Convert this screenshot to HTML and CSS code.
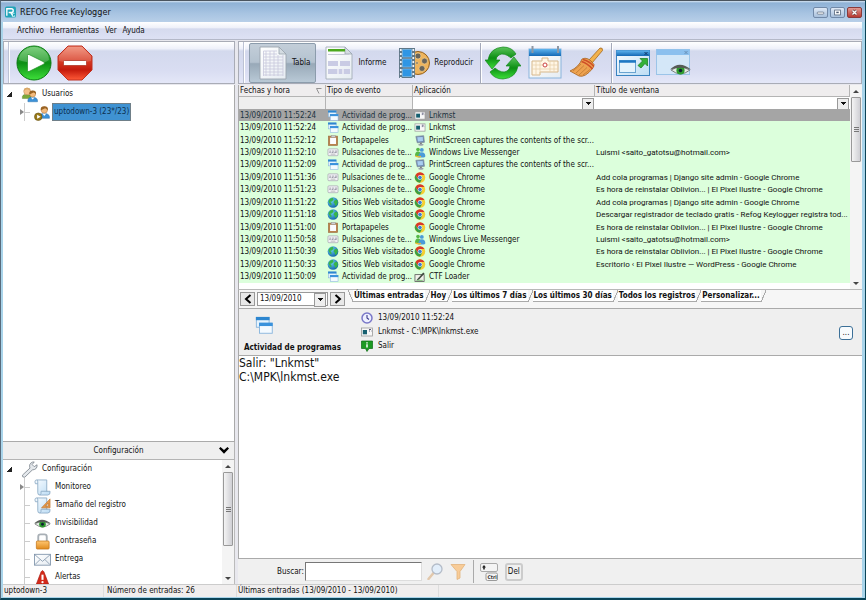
FILE: index.html
```html
<!DOCTYPE html>
<html lang="es">
<head>
<meta charset="utf-8">
<title>REFOG Free Keylogger</title>
<link rel="stylesheet" href="styles.css">
</head>
<body>
<svg class="defs" width="0" height="0" aria-hidden="true">
  <defs>
    <linearGradient id="gGreen" x1="0" y1="0" x2="0" y2="1"><stop offset="0" stop-color="#5cc45c"/><stop offset=".5" stop-color="#0c8f14"/><stop offset="1" stop-color="#3ee03a"/></linearGradient>
    <linearGradient id="gRed" x1="0" y1="0" x2="0" y2="1"><stop offset="0" stop-color="#f08a72"/><stop offset=".45" stop-color="#d63a24"/><stop offset=".7" stop-color="#c41a0c"/><stop offset="1" stop-color="#ff5a38"/></linearGradient>
    <linearGradient id="gPaper" x1="0" y1="0" x2="1" y2="1"><stop offset="0" stop-color="#ffffff"/><stop offset="1" stop-color="#e6ecf2"/></linearGradient>
    <linearGradient id="gBlue" x1="0" y1="0" x2="0" y2="1"><stop offset="0" stop-color="#5fb4ee"/><stop offset="1" stop-color="#1468b4"/></linearGradient>
    <linearGradient id="gSky" x1="0" y1="0" x2="1" y2="1"><stop offset="0" stop-color="#f8fcff"/><stop offset="1" stop-color="#bcdcf4"/></linearGradient>
    <linearGradient id="gGold" x1="0" y1="0" x2="0" y2="1"><stop offset="0" stop-color="#ffc772"/><stop offset="1" stop-color="#e08a1c"/></linearGradient>
    <radialGradient id="gGlobe" cx=".35" cy=".3" r=".8"><stop offset="0" stop-color="#6fd4f4"/><stop offset="1" stop-color="#0a5aa4"/></radialGradient>
  </defs>
  <symbol id="i-win" viewBox="0 0 12 12"><rect x=".9" y="1" width="8.500" height="6.500" fill="#e6f3fd" stroke="#86b4dc" stroke-width=".6"/><rect x=".6" y=".6" width="9.100" height="2.200" fill="#2c86d0"/><rect x="3" y="5" width="8.500" height="6.500" fill="#f4faff" stroke="#86b4dc" stroke-width=".6"/><rect x="2.700" y="4.400" width="9.100" height="2.300" fill="#3a92dc"/></symbol>
  <symbol id="i-clip" viewBox="0 0 12 12"><rect x="1" y="1.200" width="10" height="10.200" fill="#b9834e" stroke="#9d6c40" stroke-width=".7"/><rect x="2.800" y="3" width="6.500" height="6.800" fill="#fbfbff"/><rect x="4" y=".5" width="4.500" height="2" fill="#ced0d4" stroke="#888" stroke-width=".4"/></symbol>
  <symbol id="i-key" viewBox="0 0 12 12"><rect x=".5" y="2" width="11" height="7.500" rx="1" fill="#f2f2f6" stroke="#9c9ca8" stroke-width=".7"/><path d="M2 4.500h2m1 0h2m1 0h2.500M2 6h1.500m1 0h2m1 0h2.500" stroke="#8c8c9a" stroke-width=".9"/><path d="M3.500 7.800h5" stroke="#aaa" stroke-width=".8"/></symbol>
  <symbol id="i-globe" viewBox="0 0 12 12"><circle cx="6" cy="6" r="5.800" fill="url(#gGlobe)"/><path d="M2 2.600Q4 .8 6 1.200L6.600 3 4.800 5 3 5.300 4.500 7.300 4 9.500 2.500 7.500 1 5ZM8 3.500l2.300-.6 1.100 2.600-1.200 3.200-1.700 1-.8-2.500-1.200-1.500Z" fill="#39b54a"/></symbol>
  <symbol id="i-chrome" viewBox="0 0 12 12"><circle cx="6" cy="6" r="5.700" fill="#f4cf33"/><path d="M1.060 3.150A5.700 5.700 0 0 1 10.940 3.150H6L3.530 7.430Z" fill="#d9382c"/><path d="M1.060 3.150A5.700 5.700 0 0 0 6 11.700L8.470 7.430 3.530 7.430Z" fill="#3a9f45"/><circle cx="6" cy="6" r="2.500" fill="#fff"/><circle cx="6" cy="6" r="2" fill="#3e7fd0"/></symbol>
  <symbol id="i-msn" viewBox="0 0 12 12"><circle cx="3.800" cy="2.800" r="2" fill="#57b947"/><path d="M.5 10Q.5 5 3.800 5t3.500 4.500Z" fill="#57b947"/><circle cx="8" cy="3.200" r="2.100" fill="#4a9bd8"/><path d="M4 11.500Q4.500 5.800 8 5.800t3.800 4Q12 11.500 8 11.500Z" fill="#4a9bd8"/><path d="M1 9.500q3 2.500 6 .5" stroke="#f3b92c" stroke-width="1.300" fill="none"/></symbol>
  <symbol id="i-screen" viewBox="0 0 12 12"><path d="M1.500 1.500 10 .8 10.800 8 3 8.500Z" fill="#6f8db4" stroke="#7c869a" stroke-width=".8"/><path d="M3 2.500 9 2.200 9.300 6.500 3.800 7Z" fill="#a9cdf0"/><path d="M6 8.500h2v1.500H6Z" fill="#777"/><ellipse cx="7" cy="10.600" rx="3" ry="1" fill="#9ba0aa"/></symbol>
  <symbol id="i-exe" viewBox="0 0 12 12"><rect x=".5" y="2" width="11" height="8" fill="#f8f8f8" stroke="#9a9a9a" stroke-width=".8"/><rect x="1.800" y="4" width="4.200" height="4.300" fill="#176070"/><path d="M8 3.500h2M8 5h1m1 0h.5" stroke="#446" stroke-width=".9"/></symbol>
  <symbol id="i-ctf" viewBox="0 0 12 12"><rect x=".5" y="4" width="10" height="7.500" fill="#f1f1ea" stroke="#4a4a4a" stroke-width=".8"/><path d="M3 9 9.500 1.500 11 2.800 5 9.300 2.500 10Z" fill="#404a40"/><path d="M2 10.200h7" stroke="#5a5" stroke-width=".8"/></symbol>
  <symbol id="i-person" viewBox="0 0 18 18"><path d="M3 17q-1-6 6-6.500 8 .500 7 6.500Z" fill="#3c92d8" stroke="#226aa8" stroke-width=".6"/><path d="m7 11 2.500 3 2.500-3Z" fill="#fff"/><circle cx="9.500" cy="6.500" r="4" fill="#f3bb7e" stroke="#a86a2c" stroke-width=".6"/><path d="M5 7Q4 1.500 9.500 1.500T14 7Q12.500 4.500 10.500 4.200 8 5.500 5 7Z" fill="#9a6424"/></symbol>
  <symbol id="i-elder" viewBox="0 0 18 18"><path d="M2 17q-1-6 6-6.500 8 .500 7 6.500Z" fill="#7aa83a" stroke="#5a7c2a" stroke-width=".6"/><circle cx="9" cy="6.500" r="5" fill="#f3c08a" stroke="#b47c44" stroke-width=".6"/><path d="M4 6Q4 1 9 1T14 6Q11 3.500 9 3.500T4 6Z" fill="#d8a868"/></symbol>
  <symbol id="i-scroll" viewBox="0 0 18 18"><path d="M1 3Q1 1 3 1H13.500V13H17Q17.500 17 14.500 17H6Q4 17 4 14.500V5H1.500Z" fill="url(#gSky)" stroke="#8aa9c4" stroke-width=".9"/><path d="M4 5V3Q4 1 3 1M6 17Q8 16 7.500 13H14" fill="none" stroke="#8aa9c4" stroke-width=".9"/></symbol>
  <symbol id="i-eye" viewBox="0 0 18 11"><path d="M1 6Q8 1 17 6 9 12.500 1 6Z" fill="#e3ebe3" stroke="#666" stroke-width=".7"/><circle cx="9" cy="6.300" r="3.500" fill="#2e9b2e"/><circle cx="9" cy="6.300" r="1.500" fill="#123"/><path d="M0 5.500Q8-2.500 18 5.500 9 2.300 0 5.500Z" fill="#565c56"/></symbol>
</svg>

<div class="window">
  <header class="titlebar">
    <svg class="logo" viewBox="0 0 12 12"><rect width="12" height="12" rx="2" fill="#22a4b8"/><path d="M2 10V2.500H7Q9 2.500 9 4.500T7 6.500H4M6 6.500 8.500 10" fill="none" stroke="#fff" stroke-width="1.500"/><path d="M10.500 7.500H8V11h2.500V9.500" fill="none" stroke="#d8ffff" stroke-width=".8"/></svg>
    <h1>REFOG Free Keylogger</h1>
    <div class="winbtns">
      <button aria-label="Minimizar"><svg viewBox="0 0 15 11"><rect x="3.500" y="5" width="8" height="2.500" rx="1" fill="#fff" stroke="#4a5a70" stroke-width=".8"/></svg></button>
      <button aria-label="Maximizar"><svg viewBox="0 0 15 11"><rect x="4" y="2.500" width="7" height="6" fill="#fff" stroke="#4a5a70" stroke-width=".9"/><rect x="6" y="4.500" width="3" height="1.800" fill="#4a5a70"/></svg></button>
      <button class="close" aria-label="Cerrar"><svg viewBox="0 0 15 11"><path d="m5 3 5 5m0-5-5 5" stroke="#5a2a2a" stroke-width="3"/><path d="m5 3 5 5m0-5-5 5" stroke="#fff" stroke-width="1.800"/></svg></button>
    </div>
  </header>

  <nav class="menubar">
    <a href="#">Archivo</a><a href="#">Herramientas</a><a href="#">Ver</a><a href="#">Ayuda</a>
  </nav>

  <div class="panes">
    <aside class="left">
      <div class="toolbar">
        <button class="tool round" aria-label="Iniciar"><svg width="36" height="36" viewBox="0 0 36 36"><circle cx="18" cy="18" r="17" fill="url(#gGreen)" stroke="#0b7a12"/><path d="M3 15A15 13 0 0 1 33 15Q26 20 18 18 8 17 3 15Z" fill="#fff" opacity=".22"/><path d="M11.500 10.500Q11.500 9 13 9.500L28 17Q29 18 28 19L13 26.500Q11.500 27 11.500 25.500Z" fill="#fff" stroke="#1c8c22" stroke-width=".7"/></svg></button>
        <button class="tool round" aria-label="Detener"><svg width="36" height="36" viewBox="0 0 36 36"><path d="M11 1H25L35 11V25L25 35H11L1 25V11Z" fill="url(#gRed)" stroke="#c03020"/><path d="M11 2H25L34 11V16Q18 20 2 16V11Z" fill="#fff" opacity=".15"/><rect x="6.500" y="15.500" width="23" height="5" rx="1" fill="#fff" stroke="#a82818" stroke-width=".7"/></svg></button>
      </div>
      <ul class="tree users">
        <li class="root"><i class="open"></i><svg width="17" height="17" viewBox="0 0 18 18"><use href="#i-elder" x="0" y="0" width="13" height="15"/><use href="#i-person" x="5" y="3" width="14" height="15"/></svg><span>Usuarios</span></li>
        <li class="child"><i class="shut"></i><svg width="17" height="17" viewBox="0 0 18 18"><use href="#i-person" x="3" y="0" width="15" height="17"/><circle cx="4.500" cy="13.500" r="4" fill="#9a7a18" stroke="#5f4a0c" stroke-width=".6"/><path d="M3.300 11.500 7 13.500 3.300 15.500Z" fill="#fff"/></svg><span class="sel">uptodown-3 (23*/23)</span></li>
      </ul>
      <button class="section"><span>Configuración</span><svg width="10" height="7" viewBox="0 0 10 7"><path d="M0 1.500 1.500 0 5 3 8.500 0 10 1.500 5 6.800Z"/></svg></button>
      <div class="config">
        <ul class="tree">
          <li class="root"><i class="open"></i><svg width="17" height="17" viewBox="0 0 18 18"><path d="M1.500 15 9.500 7.500Q8 3 12 1.200L14 1 11.800 3.800 14 6 17 4Q17.500 9 12 9.500L4 17.200Q1 17.500 1.500 15Z" fill="#e4e8ec" stroke="#7d858e" stroke-width=".9"/></svg><span>Configuración</span></li>
          <li class="child"><i class="shut"></i><svg width="17" height="17"><use href="#i-scroll"/></svg><span>Monitoreo</span></li>
          <li class="child"><i></i><svg width="17" height="17" viewBox="0 0 18 18"><use href="#i-scroll"/><path d="M8 11.500 17 2V11.500ZM12 9.800H15V6.500Z" fill="#e99a4a" stroke="#b4691e" stroke-width=".6" fill-rule="evenodd"/></svg><span>Tamaño del registro</span></li>
          <li class="child"><i></i><svg width="17" height="11"><use href="#i-eye"/></svg><span>Invisibilidad</span></li>
          <li class="child"><i></i><svg width="17" height="17" viewBox="0 0 18 18"><path d="M4.500 9V4Q4.500 1.500 7 1.500H11Q13.500 1.500 13.500 4V9" fill="none" stroke="#a9b0b6" stroke-width="2"/><rect x="2.500" y="8.500" width="13.500" height="8.500" rx="1" fill="url(#gGold)" stroke="#c5761a" stroke-width=".8"/></svg><span>Contraseña</span></li>
          <li class="child"><i></i><svg width="17" height="17" viewBox="0 0 18 18"><rect x=".5" y="3.500" width="17" height="11.500" fill="url(#gPaper)" stroke="#7d92aa" stroke-width=".9"/><path d="M1 4 9 11 17 4M1 14.500 6.500 9M17 14.500 11.500 9" fill="none" stroke="#8799ae" stroke-width=".9"/></svg><span>Entrega</span></li>
          <li class="child"><i></i><svg width="17" height="17" viewBox="0 0 18 18"><path d="M7.500 3 9 1.500 10.500 3 15.500 16H2.500Z" fill="#d42a1a" stroke="#a51a10" stroke-width=".7"/><path d="M9 6V11.500" stroke="#fff" stroke-width="2.200"/><circle cx="9" cy="14" r="1.200" fill="#fff"/></svg><span>Alertas</span></li>
        </ul>
        <div class="scroll"><i class="up"></i><b></b><i class="down"></i></div>
      </div>
    </aside>

    <main class="right">
      <div class="toolbar">
        <button class="tool view on"><svg width="28" height="34" viewBox="0 0 28 34"><path d="M1 1H20L27 8V33H1Z" fill="url(#gPaper)" stroke="#9aa4ae" stroke-width=".9"/><path d="M20 1V8H27Z" fill="#d4dce2" stroke="#9aa4ae" stroke-width=".8"/><path d="M4.500 5H18M4.500 8H18M4.500 11H24M4.500 14H24M4.500 17H24M4.500 20H24M4.500 23H24M4.500 26H24M4.500 29H24M4.500 5V30M7 5V30M11 5V30M15 5V30M19 9V30M24 9V30" stroke="#c8c8dc" stroke-width=".8"/></svg><span>Tabla</span></button>
        <button class="tool view report"><svg width="28" height="34" viewBox="0 0 28 34"><path d="M1 1H20L27 8V33H1Z" fill="url(#gPaper)" stroke="#a4aeb8" stroke-width=".9"/><path d="M20 1V8H27Z" fill="#d4dce2" stroke="#9aa4ae" stroke-width=".8"/><rect x="3" y="3" width="17" height="2.500" fill="#4aa81c"/><path d="M3 8.500H24" stroke="#c4c8d4"/><path d="M3 15H13V20H3ZM15 15H25V20H15ZM3 23H25V28H3Z" fill="#c9cbe4"/><path d="M13 23V28M18 23V28" stroke="#fff"/></svg><span>Informe</span></button>
        <button class="tool view play"><svg width="32" height="32" viewBox="0 0 32 32"><circle cx="20" cy="16" r="11.500" fill="#eeb45c" stroke="#93601c"/><g fill="#68655c" stroke="#f6d08c" stroke-width=".7"><circle cx="20" cy="9" r="3"/><circle cx="26.500" cy="14" r="3"/><circle cx="24" cy="21.500" r="3"/><circle cx="19" cy="16" r="1.300"/></g><path d="M1 1H17V31H1Z" fill="#607888"/><path d="M2.800 2V31M15.300 2V31" stroke="#f0f4f8" stroke-width="1.700" stroke-dasharray="2 2"/><path d="M4.500 2.500H13.500V10H4.500ZM4.500 12H13.500V20H4.500ZM4.500 22H13.500V29.500H4.500Z" fill="#2f96e4" stroke="#8cc8f4" stroke-width=".6"/></svg><span>Reproducir</span></button>
        <button class="tool grip" aria-label="Actualizar"><svg width="36" height="34" viewBox="0 0 36 34"><path d="M3 14Q5 2 18 1 27 1 31 8L26 12Q19 6 14 9 11 11 11 14L15 14 7 23 0 14Z" fill="url(#gGreen)" stroke="#16881c" stroke-width=".7"/><path d="M33 20Q31 32 18 33 9 33 5 26L10 22Q17 28 22 25 25 23 25 20L21 20 29 11 36 20Z" fill="url(#gGreen)" stroke="#16881c" stroke-width=".7"/></svg></button>
        <button class="tool" aria-label="Calendario"><svg width="34" height="33" viewBox="0 0 34 33"><rect x="1" y="3" width="32" height="29" fill="url(#gPaper)" stroke="#8ab4dc"/><rect x="1" y="3" width="32" height="7" fill="url(#gBlue)"/><path d="M4.500 0V7M30 0V7" stroke="#8d97a4" stroke-width="2"/><path d="M4 15H14V12H20V15H30V26H12V29H4Z" fill="#fff6e6" stroke="#d6b78c"/><path d="M4 19H30M4 23H30M8 15V29M12 15V29M22 15V26M26 15V26" stroke="#e8d2ac" stroke-width=".8"/><circle cx="17" cy="19" r="2" fill="#fff" stroke="#c44"/></svg></button>
        <button class="tool" aria-label="Limpiar"><svg width="34" height="32" viewBox="0 0 34 32"><path d="M20 13 31 1Q34 .5 33.500 3.500L23 16Z" fill="#f2b24c" stroke="#a36820" stroke-width=".8"/><path d="M13 12Q19 9 25 17.500L24 21Q16 31 10 29L1 24Q10 20 13 12Z" fill="#eea250" stroke="#a8621c" stroke-width=".8"/><path d="M12.500 14.500Q18 16 23.500 22M14 12.500Q20 14 25 19.500" stroke="#cf4f28" stroke-width="1.600" fill="none"/><path d="M12 17 4 24M15 18.500 7 26M18 20.500 10 28M21 22.500 14 28" stroke="#b8742c" stroke-width=".7"/></svg></button>
        <button class="tool grip last" aria-label="Restaurar ventana"><svg width="34" height="26" viewBox="0 0 34 26"><rect x=".5" y=".5" width="33" height="25" fill="url(#gSky)" stroke="#3a83c0"/><rect x=".5" y=".5" width="33" height="5.500" fill="url(#gBlue)"/><path d="m28.500 2 3 3m0-3-3 3" stroke="#0d3868"/><rect x="3.500" y="10.500" width="16" height="12" fill="#e4f2fc" stroke="#6aa3d0"/><path d="M3 11.500H20" stroke="#1f78c4" stroke-width="2.500"/><path d="M24 8.500H31.500V16L29 13.500 25 18 22 15.500 26.500 11Z" fill="#35b238" stroke="#157a1c" stroke-width=".7"/></svg></button>
        <button class="tool" aria-label="Ocultar ventana"><svg width="35" height="27" viewBox="0 0 35 27"><rect x=".5" y=".5" width="33" height="25" fill="#d4e7f8" stroke="#9bc4e8"/><rect x=".5" y=".5" width="33" height="5.500" fill="#8cc0ee"/><path d="m28.500 2 3 3m0-3-3 3" stroke="#6890b8"/><use href="#i-eye" x="14" y="14" width="21" height="13"/></svg></button>
      </div>

      <div class="grid">
        <table>
          <colgroup><col class="c1"><col class="c2"><col class="c3"><col></colgroup>
          <thead>
            <tr><th>Fechas y hora<svg class="sort" width="6" height="6" viewBox="0 0 6 6"><path d="M.5 .5H5.500M.5 .5 3 5.500" fill="none" stroke="#888" stroke-width=".9"/></svg></th><th>Tipo de evento</th><th>Aplicación</th><th>Título de ventana</th></tr>
            <tr class="filter"><td></td><td></td><td><div class="combo"><select aria-label="Filtrar aplicación"><option></option></select></div></td><td><div class="combo"><select aria-label="Filtrar título de ventana"><option></option></select></div></td></tr>
          </thead>
          <tbody>
            <tr class="current"><td>13/09/2010 11:52:24</td><td><svg><use href="#i-win"/></svg>Actividad de prog...</td><td><svg><use href="#i-exe"/></svg>Lnkmst</td><td></td></tr>
            <tr><td>13/09/2010 11:52:24</td><td><svg><use href="#i-win"/></svg>Actividad de prog...</td><td><svg><use href="#i-exe"/></svg>Lnkmst</td><td></td></tr>
            <tr><td>13/09/2010 11:52:12</td><td><svg><use href="#i-clip"/></svg>Portapapeles</td><td><svg><use href="#i-screen"/></svg>PrintScreen captures the contents of the scr...</td><td></td></tr>
            <tr><td>13/09/2010 11:52:10</td><td><svg><use href="#i-key"/></svg>Pulsaciones de te...</td><td><svg><use href="#i-msn"/></svg>Windows Live Messenger</td><td>Luismi &lt;saito_gatotsu@hotmail.com&gt;</td></tr>
            <tr><td>13/09/2010 11:52:09</td><td><svg><use href="#i-win"/></svg>Actividad de prog...</td><td><svg><use href="#i-screen"/></svg>PrintScreen captures the contents of the scr...</td><td></td></tr>
            <tr><td>13/09/2010 11:51:36</td><td><svg><use href="#i-key"/></svg>Pulsaciones de te...</td><td><svg><use href="#i-chrome"/></svg>Google Chrome</td><td>Add cola programas | Django site admin - Google Chrome</td></tr>
            <tr><td>13/09/2010 11:51:23</td><td><svg><use href="#i-key"/></svg>Pulsaciones de te...</td><td><svg><use href="#i-chrome"/></svg>Google Chrome</td><td>Es hora de reinstalar Oblivion... | El Pixel Ilustre - Google Chrome</td></tr>
            <tr><td>13/09/2010 11:51:22</td><td><svg><use href="#i-globe"/></svg>Sitios Web visitados</td><td><svg><use href="#i-chrome"/></svg>Google Chrome</td><td>Add cola programas | Django site admin - Google Chrome</td></tr>
            <tr><td>13/09/2010 11:51:18</td><td><svg><use href="#i-globe"/></svg>Sitios Web visitados</td><td><svg><use href="#i-chrome"/></svg>Google Chrome</td><td>Descargar registrador de teclado gratis - Refog Keylogger registra tod...</td></tr>
            <tr><td>13/09/2010 11:51:00</td><td><svg><use href="#i-clip"/></svg>Portapapeles</td><td><svg><use href="#i-chrome"/></svg>Google Chrome</td><td>Es hora de reinstalar Oblivion... | El Pixel Ilustre - Google Chrome</td></tr>
            <tr><td>13/09/2010 11:50:58</td><td><svg><use href="#i-key"/></svg>Pulsaciones de te...</td><td><svg><use href="#i-msn"/></svg>Windows Live Messenger</td><td>Luismi &lt;saito_gatotsu@hotmail.com&gt;</td></tr>
            <tr><td>13/09/2010 11:50:39</td><td><svg><use href="#i-globe"/></svg>Sitios Web visitados</td><td><svg><use href="#i-chrome"/></svg>Google Chrome</td><td>Es hora de reinstalar Oblivion... | El Pixel Ilustre - Google Chrome</td></tr>
            <tr><td>13/09/2010 11:50:33</td><td><svg><use href="#i-globe"/></svg>Sitios Web visitados</td><td><svg><use href="#i-chrome"/></svg>Google Chrome</td><td>Escritorio ‹ El Pixel Ilustre — WordPress - Google Chrome</td></tr>
            <tr><td>13/09/2010 11:50:09</td><td><svg><use href="#i-win"/></svg>Actividad de prog...</td><td><svg><use href="#i-ctf"/></svg>CTF Loader</td><td></td></tr>
          </tbody>
        </table>
        <div class="scroll"><i class="up"></i><b></b><i class="down"></i></div>
      </div>

      <div class="range">
        <button class="step" aria-label="Día anterior"><svg width="8" height="10" viewBox="0 0 8 10"><path d="M6.500 1 2 5 6.500 9" fill="none" stroke="#000" stroke-width="2"/></svg></button>
        <div class="combo date"><select aria-label="Fecha"><option>13/09/2010</option></select></div>
        <button class="step" aria-label="Día siguiente"><svg width="8" height="10" viewBox="0 0 8 10"><path d="M1.500 1 6 5 1.500 9" fill="none" stroke="#000" stroke-width="2"/></svg></button>
        <div class="tabs">
          <button class="first">Últimas entradas</button><button>Hoy</button><button>Los últimos 7 días</button><button>Los últimos 30 días</button><button>Todos los registros</button><button>Personalizar...</button>
        </div>
      </div>

      <section class="info">
        <div class="kind"><svg width="18" height="18"><use href="#i-win"/></svg><strong>Actividad de programas</strong></div>
        <ul class="facts">
          <li><svg width="12" height="12" viewBox="0 0 12 12"><circle cx="6" cy="6" r="5" fill="#eef0ff" stroke="#7a78c8" stroke-width="1.500"/><path d="M6 3V6L8 7.500" fill="none" stroke="#3c3c8c" stroke-width="1.100"/></svg>13/09/2010 11:52:24</li>
          <li><svg width="12" height="12"><use href="#i-exe"/></svg>Lnkmst - C:\MPK\lnkmst.exe</li>
          <li><svg width="12" height="12" viewBox="0 0 12 12"><path d="M.5 1H11.500V8.500H8L6 11.500 4.500 8.500H.5Z" fill="#1d9a22" stroke="#0c6c12" stroke-width=".7"/><path d="M6 2.200V3.500M6 4.300V7.500" stroke="#fff" stroke-width="1.500"/></svg>Salir</li>
        </ul>
        <button class="more" aria-label="Más detalles">...</button>
      </section>

      <div class="text"><p>Salir: "Lnkmst"</p><p>C:\MPK\lnkmst.exe</p></div>

      <form class="search">
        <label for="q">Buscar:</label><input id="q" type="text">
        <button type="button" aria-label="Buscar texto"><svg width="16" height="17" viewBox="0 0 16 17"><path d="M6.500 10 1.500 16" stroke="#e2c8ac" stroke-width="2.500" stroke-linecap="round"/><circle cx="10" cy="6" r="5" fill="#e2eefa" stroke="#b4bcc8" stroke-width="1.300"/></svg></button>
        <button type="button" aria-label="Filtrar"><svg width="16" height="17" viewBox="0 0 16 17"><path d="M1 1.500H15L10 8.500V15L7 16.500V8.500Z" fill="#f8cc98" stroke="#e2b47c" stroke-width=".8"/></svg></button>
        <span class="bar"></span>
        <button type="button" aria-label="Mayús + Ctrl"><svg width="18" height="18" viewBox="0 0 18 18"><rect x=".5" y=".5" width="17" height="8" rx="1.500" fill="#f4f4f4" stroke="#aaa"/><path d="M2 4.500 4 2 6 4.500H4.800V6.500H3.200V4.500Z" fill="#222"/><rect x="6" y="10" width="11.500" height="7.500" rx="1.500" fill="#f4f4f4" stroke="#9a9a9a"/><text x="7.500" y="16" font-size="5" font-weight="bold" fill="#333">Ctrl</text></svg></button>
        <button type="button" class="del">Del</button>
      </form>
    </main>
  </div>

  <footer class="status"><span>uptodown-3</span><span>Número de entradas: 26</span><span>Últimas entradas (13/09/2010 - 13/09/2010)</span><span></span></footer>
</div>
</body>
</html>
```
FILE: styles.css
```css
* { box-sizing: border-box; }
body, h1, ul, p { margin: 0; padding: 0; }
ul { list-style: none; }
body {
  font: 8px/12px "DejaVu Sans Condensed", "DejaVu Sans", sans-serif;
  color: #111;
  overflow: hidden;
}
button, input, select { font: inherit; color: inherit; margin: 0; padding: 0; border: 0; background: none; }
a { color: inherit; text-decoration: none; }
svg { display: block; flex: none; }
.defs { position: absolute; }

.window {
  display: flex;
  flex-direction: column;
  height: 100vh;
  border: solid;
  border-width: 1px 1px 2px;
  border-color: #4a5560 #0b4458 #0b4458 #596b7c;
  background: #a9d4ea;
  padding: 0 3px 1px 2px;
}

.titlebar {
  display: flex;
  align-items: center;
  height: 21px;
  flex: none;
  margin: 0 -3px 0 -2px;
  padding: 1px 3px 0 4px;
  gap: 4px;
  background: linear-gradient(#d6e4f2 0, #8fb2d6 2px, #a8c4e2 60%, #b8cfe8);
}
.titlebar h1 { font-size: 9px; font-weight: normal; }
.logo { width: 11px; height: 12px; }
.winbtns { display: flex; gap: 2px; margin-left: auto; }
.winbtns button { width: 15px; height: 11px; border: 1px solid #7189a8; border-radius: 2px; background: linear-gradient(#dfe9f5, #a8c0dc); }
.winbtns .close { border-color: #8a3a3a; background: linear-gradient(#e09a92, #b83a32); }
.winbtns svg { width: 100%; height: 100%; }

.menubar {
  display: flex;
  align-items: center;
  gap: 6px;
  height: 18px;
  flex: none;
  padding: 1px 0 0 14px;
  border-bottom: 1px solid #b4b8c8;
  background: linear-gradient(#fff 0, #eef0f9 35%, #d5daee 40%, #dde1f4);
}

.panes { display: grid; grid-template-columns: 232px minmax(0, 1fr); gap: 3px; flex: 1; min-height: 0; background: #e8e8ee; }
.left, .right { display: flex; flex-direction: column; min-width: 0; min-height: 0; }

.toolbar {
  display: flex;
  align-items: center;
  height: 43px;
  flex: none;
  margin: 1px 0;
  border: 1px solid #a9acb6;
  background:
    linear-gradient(90deg, transparent 4px, #bcc2d4 4px 5px, #fff 5px 6px, transparent 6px),
    linear-gradient(#fff 0, #eff1fa 16%, #d3d9ed 22%, #d9ddf2 70%, #e4e7f8);
}
.left .toolbar { padding-left: 12px; gap: 5px; }
.right .toolbar { padding-left: 10px; }
.tool { display: flex; align-items: center; justify-content: center; height: 40px; width: 41px; flex: none; }
.left .tool { width: 36px; }
.tool.view { gap: 5px; width: auto; padding: 0 5px 0 9px; }
.tool.on { border: 1px solid #8c9cac; border-radius: 2px; background: linear-gradient(#c3ced9 0, #b4c2cf 48%, #98a9b8 52%, #b9c9d6); }
.tool.report { padding-right: 0; }
.tool.play { padding: 0 7px 0 12px; gap: 4px; }
.tool.grip { border-left: 1px solid #a4a9ba; box-shadow: inset 1px 0 #fff; width: 44px; }
.tool.last { margin-left: 5px; width: 42px; }

.tree { background: #fff; color: #111; }
.tree li { display: flex; align-items: center; height: 18px; gap: 4px; }
.tree.users { flex: 1; border: 1px solid #aaa; border-width: 0 1px 1px 0; }
.tree .root { padding-left: 4px; }
.tree .child { padding-left: 17px; }
.tree i { width: 10px; height: 18px; flex: none; display: grid; place-items: center start; position: relative; }
.tree .child i::after { content: ""; position: absolute; inset: 0 0 0 4px; border-left: 1px solid #ccc; background: linear-gradient(#ccc, #ccc) 0 9px / 6px 1px no-repeat; }
.tree .open::before { content: ""; width: 5px; height: 5px; background: linear-gradient(135deg, transparent 50%, #222 50%); }
.tree .shut::before { content: ""; border: solid transparent; border-width: 3px 0 3px 4px; border-left-color: #888; z-index: 1; }
.sel { background: #3f92d2; color: #0c3050; border: 1px solid #6f7f88; padding: 2px 1px; margin-left: -3px; }

.section { display: flex; align-items: center; height: 18px; flex: none; border: 1px solid #b4b4b4; border-width: 0 1px 1px 0; background: #efefef; padding: 0 5px 0 15px; }
.section span { flex: 1; }
.config { display: flex; height: 124px; flex: none; background: #fff; overflow: hidden; border-right: 1px solid #bbb; }
.config .tree { flex: 1; }

.scroll { display: flex; flex-direction: column; align-items: center; width: 12px; flex: none; background: #f4f4f4; }
.scroll i { height: 12px; flex: none; display: grid; place-items: center; }
.scroll i::before { content: ""; border: solid transparent; border-width: 0 3px 3px; border-bottom-color: #444; }
.scroll .down { margin-top: auto; }
.scroll .down::before { border-width: 3px 3px 0; border-top-color: #444; }
.scroll b { width: 10px; height: 65px; border: 1px solid #999; border-radius: 1px; background: repeating-linear-gradient(#777 0 1px, transparent 1px 2px) center / 5px 5px no-repeat, linear-gradient(90deg, #f4f4f4, #cfcfd4); }
.config .scroll b { height: 74px; }

.grid { display: flex; height: 205px; flex: none; background: #fff; border-left: 1px solid #aaa; border-bottom: 1px solid #b8b8b8; }
table { border-collapse: separate; border-spacing: 0; table-layout: fixed; flex: 1; width: 0; height: 198px; align-self: flex-start; }
.c1 { width: 87px; } .c2 { width: 87px; } .c3 { width: 182px; }
th, td { padding: 0 1px; height: 12px; line-height: 11px; overflow: hidden; white-space: nowrap; text-align: left; font-weight: normal; vertical-align: middle; }
th { background: #efedee; border: solid #b4b4b4; border-width: 0 1px 1px 0; position: relative; }
.sort { position: absolute; right: 3px; top: 3px; }
tbody tr { background: #dcffdc; }
tbody .current { background: #a5a5a5; color: #1c3340; }
tbody td:last-child { font-family: Roboto, sans-serif; padding-right: 0; }
td svg { display: inline-block; width: 12px; height: 11px; vertical-align: top; margin-right: 3px; }
.filter td { border-right: 1px solid #b4b4b4; background: #efefef; padding: 0; }
.filter td:nth-child(n+3) { background: #fff; border-right: 0; }

.combo { position: relative; background: #fff; }
.combo select { display: block; width: 100%; height: 11px; appearance: none; }
.combo::after { content: ""; position: absolute; right: 1px; top: 0; width: 10px; height: 100%; border: 1px solid #999; background: linear-gradient(#111, #111) center 3px / 5px 1px no-repeat, linear-gradient(#111, #111) center 4px / 3px 1px no-repeat, linear-gradient(#111, #111) center 5px / 1px 1px no-repeat, #eee; pointer-events: none; }

.range { display: flex; align-items: center; height: 18px; flex: none; gap: 2px; padding-left: 1px; background: #f6f6f6; border-left: 1px solid #aaa; }
.step { display: grid; place-items: center; width: 15px; height: 14px; border: 1px solid #999; background: #e8e8e8; }
.date { width: 71px; border: 1px solid #999; height: 14px; }
.date select { height: 12px; padding-left: 2px; }
.date::after { background-position: center 4px, center 5px, center 6px, 0 0; }
.tabs { display: flex; align-self: flex-start; margin-left: 6px; }
.tabs button { position: relative; height: 12px; padding: 0 1px; margin-right: 5px; border-bottom: 1px solid #aaa; background: #fff; font-weight: bold; line-height: 12px; }
.tabs button::after { content: ""; position: absolute; left: 100%; bottom: -1px; width: 5px; height: 12px; background: linear-gradient(113deg, transparent 45%, #aaa 46% 56%, transparent 57%); }
.tabs .first::before { content: ""; position: absolute; right: 100%; bottom: -1px; width: 5px; height: 12px; background: linear-gradient(67deg, transparent 45%, #aaa 46% 56%, transparent 57%); }

.info { display: flex; height: 48px; flex: none; padding: 2px 9px 1px 5px; background: #efefef; border: solid #aaa; border-width: 1px 0 1px 1px; }
.kind { display: flex; flex-direction: column; justify-content: space-between; width: 117px; }
.kind svg { margin: 5px 0 0 11px; }
.facts li { display: flex; align-items: center; gap: 5px; height: 14px; }
.more { align-self: center; margin-left: auto; width: 14px; height: 14px; border: 1px solid #3c7098; border-radius: 3px; background: #f8fbfd; }

.text { flex: 1; background: #fff; border: solid #aaa; border-width: 0 0 1px 1px; font-size: 12px; line-height: 14px; }

.search { display: flex; align-items: center; height: 25px; flex: none; padding-left: 39px; background: #f0f0f0; }
.search input { width: 117px; height: 19px; margin: 0 5px 0 1px; background: #fff; border: 1px solid #ddd; border-top-color: #777; border-left-color: #777; }
.search button { margin-right: 7px; }
.search .bar { width: 1px; height: 23px; background: #aaa; margin: 0 6px 0 0; }
.search .del { width: 18px; height: 18px; border: 2px solid #ccc; border-radius: 3px; background: #f0f0f0; }

.status { display: flex; height: 13px; flex: none; background: #f0eeee; border-top: 1px solid #ccc; line-height: 12px; }
.status span { padding-left: 1px; border-right: 1px solid #ddd; }
.status span:nth-child(1) { width: 101px; }
.status span:nth-child(2) { width: 133px; padding-left: 3px; }
.status span:nth-child(3) { width: 202px; }
.status span:nth-child(4) { flex: 1; border: 0; }
```
